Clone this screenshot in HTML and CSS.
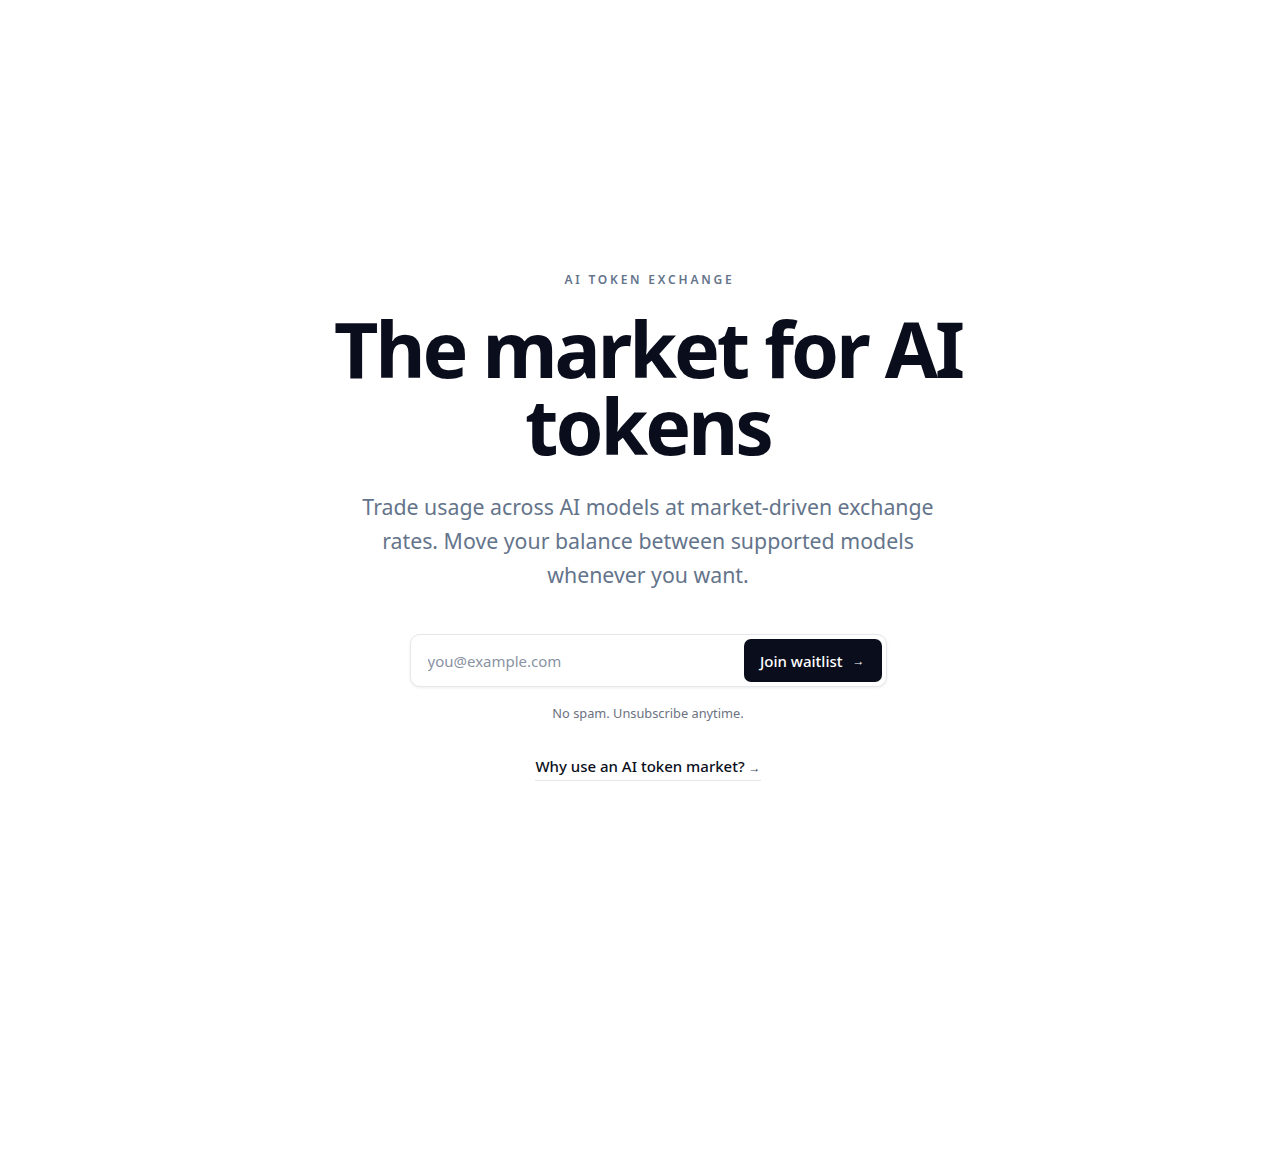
FILE: index.html
```html
<!DOCTYPE html>
<html lang="en">
<head>
<meta charset="utf-8">
<title>AI Token Exchange</title>
<link rel="stylesheet" href="styles.css">
</head>
<body>
<main class="hero">
  <p class="eyebrow">AI TOKEN EXCHANGE</p>
  <h1 class="title">The market for AI tokens</h1>
  <p class="lead">Trade usage across AI models at market-driven exchange rates. Move your balance between supported models whenever you want.</p>
  <form class="signup" onsubmit="return false">
    <input class="email" type="email" placeholder="you@example.com">
    <button class="join" type="submit">Join waitlist <span class="arrow">→</span></button>
  </form>
  <p class="note">No spam. Unsubscribe anytime.</p>
  <a class="why" href="#">Why use an AI token market? <span class="arrow-sm">→</span></a>
</main>
</body>
</html>
```
FILE: styles.css
```css
* { box-sizing: border-box; }
html, body { margin: 0; padding: 0; background: #fff; }
body {
  font-family: "Noto Sans", "Open Sans", sans-serif;
  color: #0b1020;
  min-height: 1152px;
}
.hero {
  display: flex;
  flex-direction: column;
  align-items: center;
  text-align: center;
  padding-top: 270px;
  padding-left: 16px;
}
.eyebrow {
  margin: 0;
  font-size: 12px;
  font-weight: 600;
  letter-spacing: 2.8px;
  color: #64748b;
  line-height: 20px;
  padding-left: 3px;
}
.title {
  margin: 20px 0 0;
  font-size: 77px;
  font-weight: 700;
  line-height: 77px;
  letter-spacing: -3px;
  color: #0a0e1c;
  max-width: 720px;
}
.lead {
  margin: 26px 0 0;
  font-size: 21.3px;
  line-height: 34px;
  color: #64748b;
  max-width: 600px;
}
.signup {
  margin-top: 42px;
  width: 477px;
  height: 53px;
  display: flex;
  align-items: center;
  padding: 4px 4px 4px 17px;
  border: 1px solid #e5e7eb;
  border-radius: 10px;
  background: #fff;
  box-shadow: 0 1px 3px rgba(15, 23, 42, 0.08);
}
.email {
  flex: 1;
  border: 0;
  outline: none;
  font-family: inherit;
  font-size: 15px;
  color: #0b1020;
  background: transparent;
  padding: 0;
}
.email::placeholder { color: #8a93a3; }
.join {
  height: 43px;
  padding: 0 17px 0 16px;
  border: 0;
  border-radius: 7px;
  background: #0a0e1c;
  color: #fff;
  font-family: inherit;
  font-size: 15px;
  font-weight: 500;
  display: flex;
  align-items: center;
  gap: 10px;
  cursor: pointer;
}
.arrow { font-size: 12px; font-weight: 400; }
.note {
  margin: 16px 0 0;
  font-size: 12.8px;
  line-height: 20px;
  color: #6b7280;
}
.why {
  margin-top: 32px;
  font-size: 15px;
  font-weight: 500;
  color: #0b1020;
  text-decoration: none;
  border-bottom: 1px solid #e5e7eb;
  padding-bottom: 1px;
  line-height: 22px;
}
.arrow-sm { font-size: 12px; color: #334155; }
```
